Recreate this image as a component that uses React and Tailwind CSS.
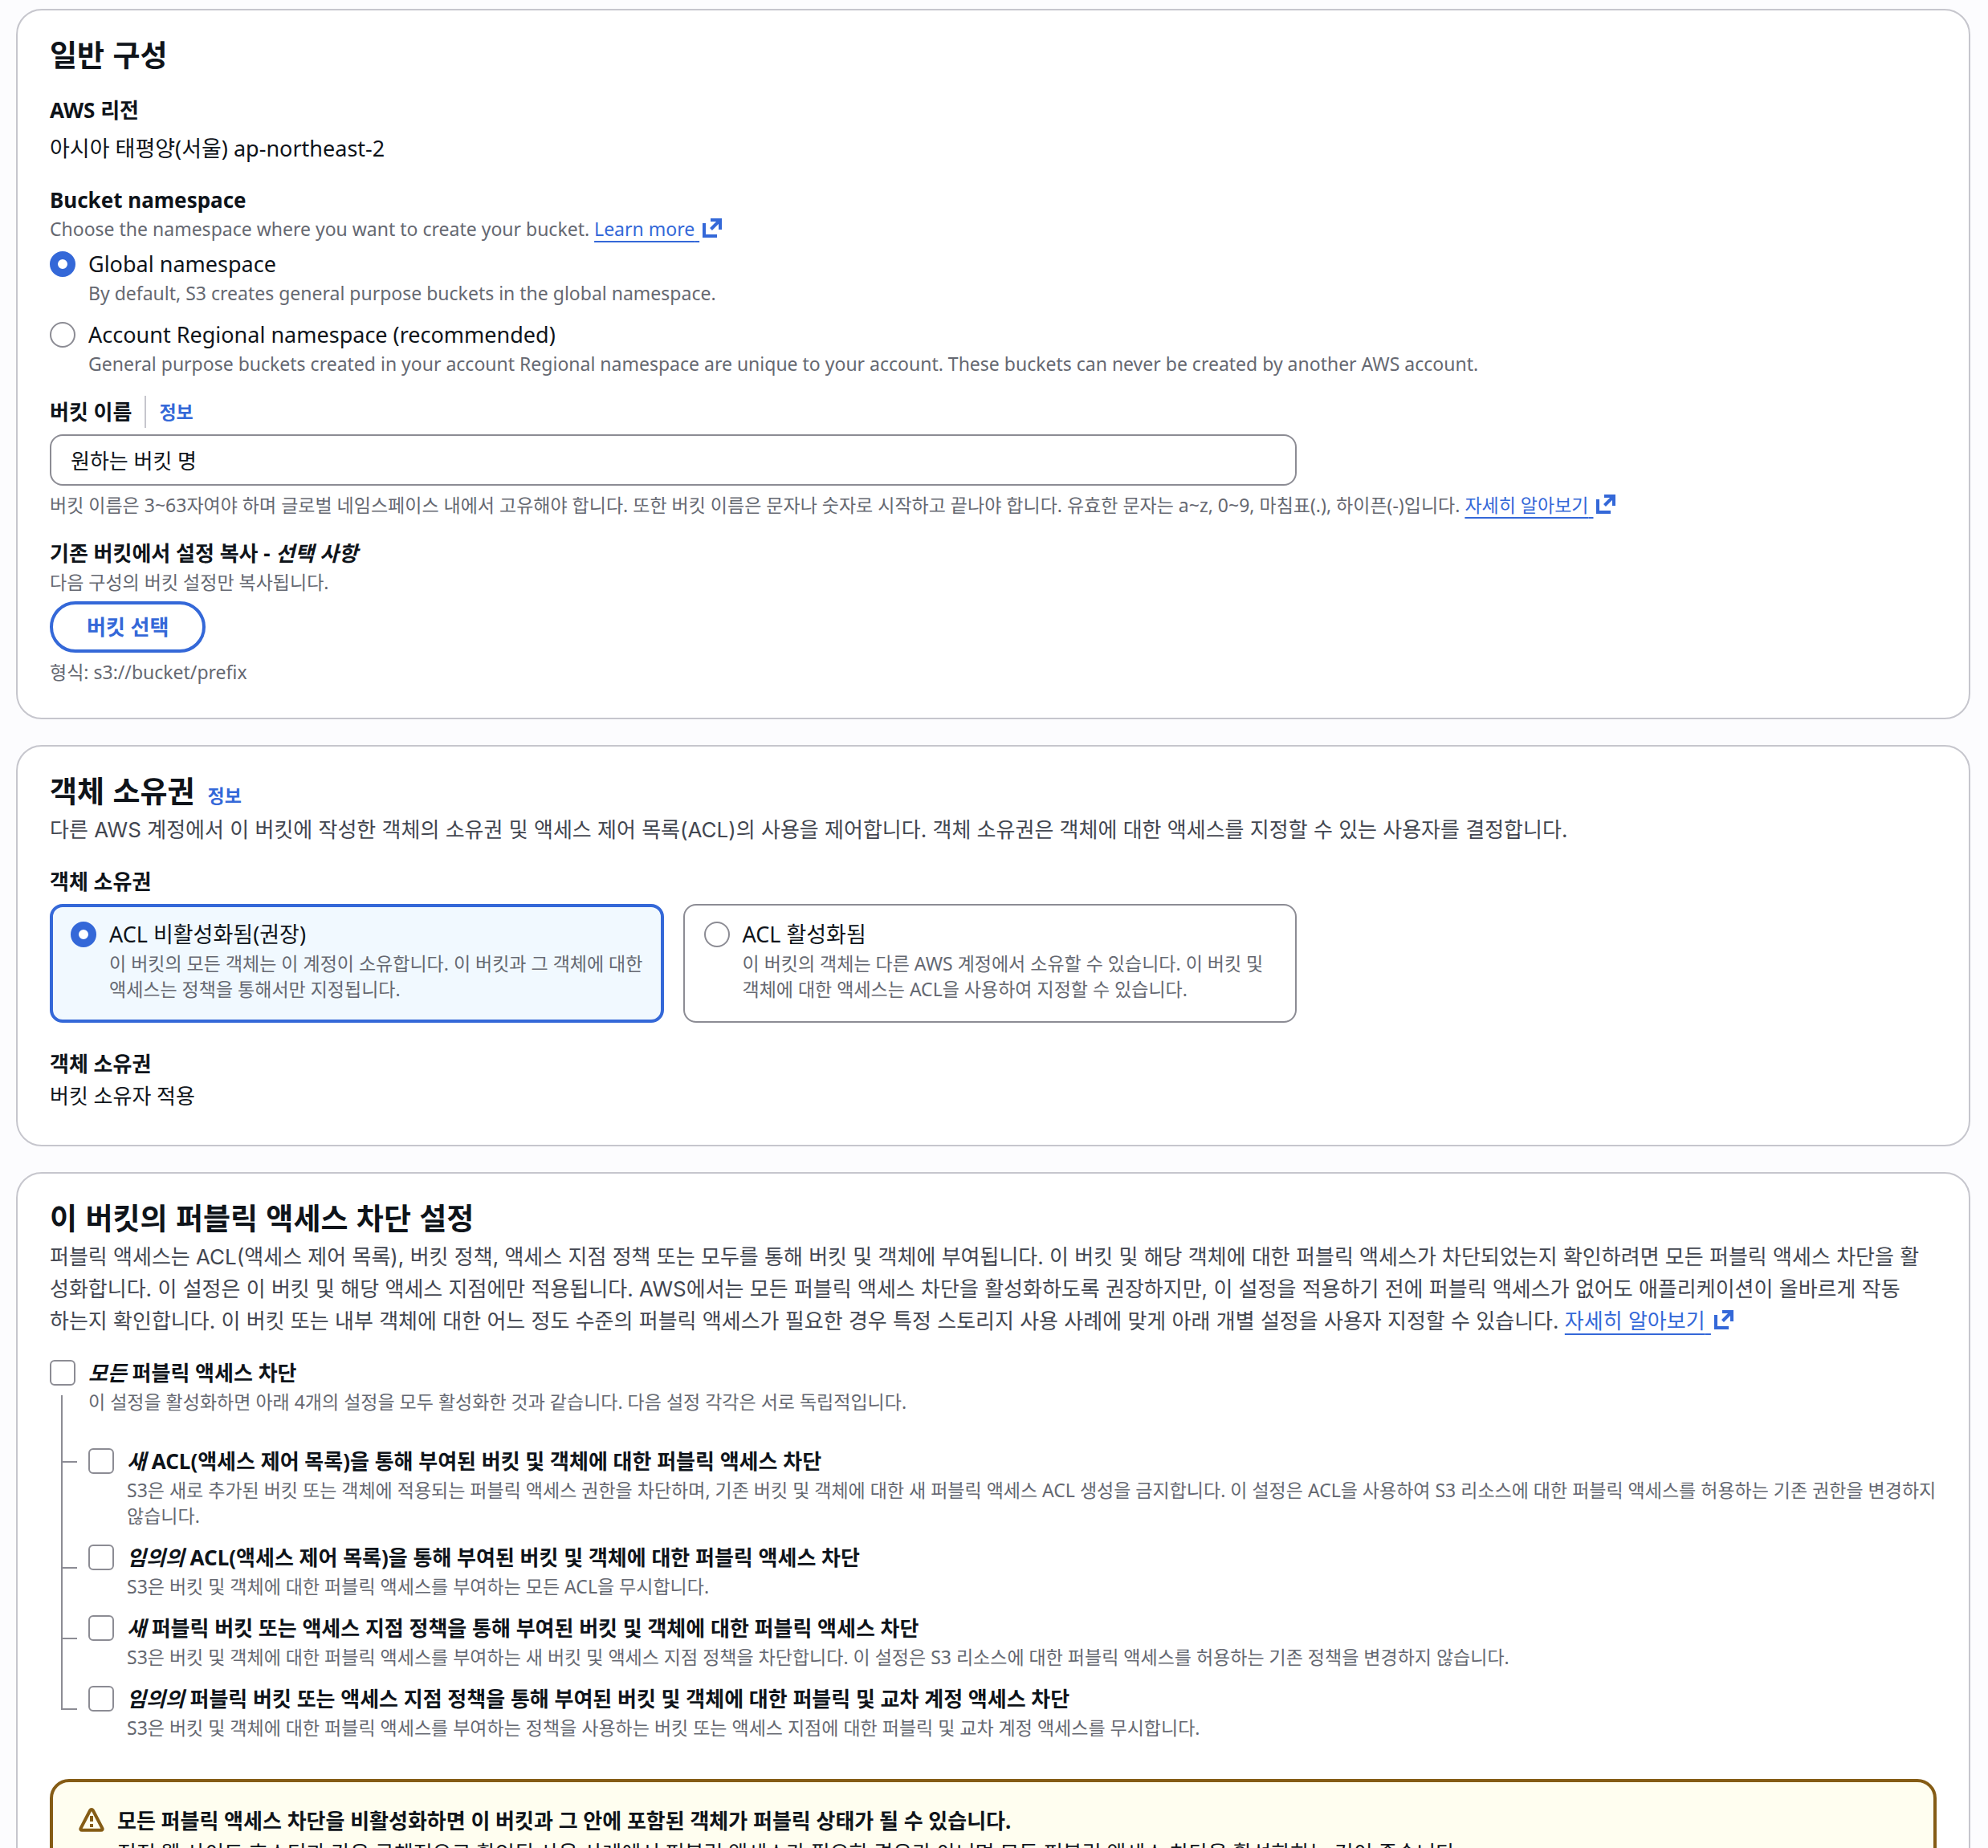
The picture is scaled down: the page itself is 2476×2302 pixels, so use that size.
import { useState } from "react";

const BLOCK_OPTIONS = [
  {
    id: "new-acl",
    em: "새",
    title: "ACL(액세스 제어 목록)을 통해 부여된 버킷 및 객체에 대한 퍼블릭 액세스 차단",
    desc: "S3은 새로 추가된 버킷 또는 객체에 적용되는 퍼블릭 액세스 권한을 차단하며, 기존 버킷 및 객체에 대한 새 퍼블릭 액세스 ACL 생성을 금지합니다. 이 설정은 ACL을 사용하여 S3 리소스에 대한 퍼블릭 액세스를 허용하는 기존 권한을 변경하지 않습니다.",
  },
  {
    id: "any-acl",
    em: "임의의",
    title: "ACL(액세스 제어 목록)을 통해 부여된 버킷 및 객체에 대한 퍼블릭 액세스 차단",
    desc: "S3은 버킷 및 객체에 대한 퍼블릭 액세스를 부여하는 모든 ACL을 무시합니다.",
  },
  {
    id: "new-policy",
    em: "새",
    title: "퍼블릭 버킷 또는 액세스 지점 정책을 통해 부여된 버킷 및 객체에 대한 퍼블릭 액세스 차단",
    desc: "S3은 버킷 및 객체에 대한 퍼블릭 액세스를 부여하는 새 버킷 및 액세스 지점 정책을 차단합니다. 이 설정은 S3 리소스에 대한 퍼블릭 액세스를 허용하는 기존 정책을 변경하지 않습니다.",
  },
  {
    id: "any-policy",
    em: "임의의",
    title: "퍼블릭 버킷 또는 액세스 지점 정책을 통해 부여된 버킷 및 객체에 대한 퍼블릭 및 교차 계정 액세스 차단",
    desc: "S3은 버킷 및 객체에 대한 퍼블릭 액세스를 부여하는 정책을 사용하는 버킷 또는 액세스 지점에 대한 퍼블릭 및 교차 계정 액세스를 무시합니다.",
  },
];

function Card({ children }) {
  return (
    <section className="bg-white border-2 border-[#c6c6cd] rounded-[32px] pt-[30px] px-10 pb-[41px]">
      {children}
    </section>
  );
}

function Title({ children }) {
  return (
    <h2 className="font-['Noto_Sans_CJK_KR','Noto_Sans',sans-serif] text-[37px] leading-[48px] font-bold">{children}</h2>
  );
}

function Description({ children }) {
  return (
    <p className="mt-[6px] font-['Inter','Noto_Sans_CJK_KR',sans-serif] text-[#424650]">{children}</p>
  );
}

function Hint({ children, className = "" }) {
  return <p className={`text-[23px] leading-8 text-[#656871] ${className}`}>{children}</p>;
}

function ExternalIcon() {
  return (
    <svg viewBox="0 0 24 24" className="inline-block w-6 h-6 ml-1 -mt-2 align-middle" fill="none" stroke="currentColor" strokeWidth="4" aria-hidden="true">
      <path d="M10 2h12v12" />
      <path d="M21.5 2.5 10.5 13.5" />
      <path d="M2 6v16h16" />
    </svg>
  );
}

function ExternalLink({ children }) {
  return (
    <a href="#" className="text-[#3468d8] whitespace-nowrap">
      <span className="underline decoration-2 underline-offset-[6px] whitespace-pre">{children} </span>
      <ExternalIcon />
    </a>
  );
}

function InfoLink() {
  return (
    <a href="#" className="text-[23px] leading-8 font-bold text-[#3468d8]">
      정보
    </a>
  );
}

function RadioOption({ id, name, value, checked, onChange, label, desc }) {
  return (
    <div className="flex gap-4">
      <input
        type="radio"
        id={id}
        name={name}
        value={value}
        checked={checked}
        onChange={() => onChange(value)}
        className="appearance-none shrink-0 w-8 h-8 mt-1 rounded-full bg-white border-2 border-[#8c8c94] checked:border-[10px] checked:border-[#3468d8]"
      />
      <div>
        <label htmlFor={id} className="block text-[27px]">{label}</label>
        <Hint>{desc}</Hint>
      </div>
    </div>
  );
}

function Checkbox({ id, checked, onChange }) {
  return (
    <input
      type="checkbox"
      id={id}
      checked={checked}
      onChange={onChange}
      className="appearance-none shrink-0 w-8 h-8 mt-1 rounded-md bg-white border-2 border-[#8c8c94] checked:bg-[#3468d8] checked:border-[#3468d8]"
    />
  );
}

function GeneralConfig() {
  const [namespace, setNamespace] = useState("global");
  const [bucket, setBucket] = useState("원하는 버킷 명");

  return (
    <Card>
      <Title>일반 구성</Title>

      <h3 className="mt-[26px] font-bold">AWS 리전</h3>
      <p className="mt-2 text-[27px]">아시아 태평양(서울) ap-northeast-2</p>

      <fieldset className="mt-6">
        <legend className="font-bold">Bucket namespace</legend>
        <Hint>
          Choose the namespace where you want to create your bucket. <ExternalLink>Learn more</ExternalLink>
        </Hint>
        <div className="mt-2 flex flex-col gap-4">
          <RadioOption
            id="ns-global"
            name="namespace"
            value="global"
            checked={namespace === "global"}
            onChange={setNamespace}
            label="Global namespace"
            desc="By default, S3 creates general purpose buckets in the global namespace."
          />
          <RadioOption
            id="ns-regional"
            name="namespace"
            value="regional"
            checked={namespace === "regional"}
            onChange={setNamespace}
            label="Account Regional namespace (recommended)"
            desc="General purpose buckets created in your account Regional namespace are unique to your account. These buckets can never be created by another AWS account."
          />
        </div>
      </fieldset>

      <div className="mt-6 flex items-center">
        <label htmlFor="bucket-name" className="font-bold pr-4 border-r-2 border-[#c6c6cd] mr-4">버킷 이름</label>
        <InfoLink />
      </div>
      <input
        id="bucket-name"
        type="text"
        value={bucket}
        onChange={(e) => setBucket(e.target.value)}
        className="block mt-2 w-full max-w-[1553px] h-16 px-6 rounded-2xl border-2 border-[#8c8c94] bg-white"
      />
      <Hint className="mt-2">
        버킷 이름은 3~63자여야 하며 글로벌 네임스페이스 내에서 고유해야 합니다. 또한 버킷 이름은 문자나 숫자로 시작하고 끝나야 합니다. 유효한 문자는 a~z, 0~9, 마침표(.), 하이픈(-)입니다.{" "}
        <ExternalLink>자세히 알아보기</ExternalLink>
      </Hint>

      <h3 className="mt-6 font-bold">
        기존 버킷에서 설정 복사 - <em>선택 사항</em>
      </h3>
      <Hint>다음 구성의 버킷 설정만 복사됩니다.</Hint>
      <button
        type="button"
        className="block mt-2 h-16 px-[42px] rounded-full border-4 border-[#3468d8] bg-white text-[#3468d8] font-bold leading-10"
      >
        버킷 선택
      </button>
      <Hint className="mt-2">형식: s3://bucket/prefix</Hint>
    </Card>
  );
}

function Ownership() {
  const [acl, setAcl] = useState("disabled");
  const tiles = [
    {
      value: "disabled",
      label: "ACL 비활성화됨(권장)",
      desc: "이 버킷의 모든 객체는 이 계정이 소유합니다. 이 버킷과 그 객체에 대한 액세스는 정책을 통해서만 지정됩니다.",
    },
    {
      value: "enabled",
      label: "ACL 활성화됨",
      desc: "이 버킷의 객체는 다른 AWS 계정에서 소유할 수 있습니다. 이 버킷 및 객체에 대한 액세스는 ACL을 사용하여 지정할 수 있습니다.",
    },
  ];

  return (
    <Card>
      <div className="flex items-baseline gap-4">
        <Title>객체 소유권</Title>
        <InfoLink />
      </div>
      <Description>
        다른 AWS 계정에서 이 버킷에 작성한 객체의 소유권 및 액세스 제어 목록(ACL)의 사용을 제어합니다. 객체 소유권은 객체에 대한 액세스를 지정할 수 있는 사용자를 결정합니다.
      </Description>

      <fieldset className="mt-6">
        <legend className="font-bold">객체 소유권</legend>
        <div className="mt-2 grid grid-cols-2 gap-6 max-w-[1553px]">
          {tiles.map((t) => (
            <div
              key={t.value}
              className={
                acl === t.value
                  ? "min-h-[148px] rounded-2xl border-4 border-[#3468d8] bg-[#f1f9ff] px-[22px] py-[14px]"
                  : "min-h-[148px] rounded-2xl border-2 border-[#8c8c94] bg-white px-6 py-4"
              }
            >
              <RadioOption
                id={`acl-${t.value}`}
                name="acl"
                value={t.value}
                checked={acl === t.value}
                onChange={setAcl}
                label={t.label}
                desc={t.desc}
              />
            </div>
          ))}
        </div>
      </fieldset>

      <h3 className="mt-[31px] font-bold">객체 소유권</h3>
      <p>버킷 소유자 적용</p>
    </Card>
  );
}

function PublicAccess() {
  const [blocked, setBlocked] = useState([]);
  const all = blocked.length === BLOCK_OPTIONS.length;

  const toggleAll = () => setBlocked(all ? [] : BLOCK_OPTIONS.map((o) => o.id));
  const toggle = (id) =>
    setBlocked((prev) => (prev.includes(id) ? prev.filter((x) => x !== id) : [...prev, id]));

  return (
    <Card>
      <Title>이 버킷의 퍼블릭 액세스 차단 설정</Title>
      <Description>
        퍼블릭 액세스는 ACL(액세스 제어 목록), 버킷 정책, 액세스 지점 정책 또는 모두를 통해 버킷 및 객체에 부여됩니다. 이 버킷 및 해당 객체에 대한 퍼블릭 액세스가 차단되었는지 확인하려면 모든 퍼블릭 액세스 차단을 활
        <br />
        성화합니다. 이 설정은 이 버킷 및 해당 액세스 지점에만 적용됩니다. AWS에서는 모든 퍼블릭 액세스 차단을 활성화하도록 권장하지만, 이 설정을 적용하기 전에 퍼블릭 액세스가 없어도 애플리케이션이 올바르게 작동
        <br />
        하는지 확인합니다. 이 버킷 또는 내부 객체에 대한 어느 정도 수준의 퍼블릭 액세스가 필요한 경우 특정 스토리지 사용 사례에 맞게 아래 개별 설정을 사용자 지정할 수 있습니다.{" "}
        <ExternalLink>자세히 알아보기</ExternalLink>
      </Description>

      <div className="mt-6 flex gap-4">
        <Checkbox id="block-all" checked={all} onChange={toggleAll} />
        <label htmlFor="block-all" className="font-bold"><em>모든</em> 퍼블릭 액세스 차단</label>
      </div>
      <div className="flex">
        {/* trunk of the option tree */}
        <div className="w-12 pl-[14px] pt-2">
          <div className="h-full border-l-2 border-[#8c8c94]" />
        </div>
        <Hint className="pb-[38px]">
          이 설정을 활성화하면 아래 4개의 설정을 모두 활성화한 것과 같습니다. 다음 설정 각각은 서로 독립적입니다.
        </Hint>
      </div>

      <ul>
        {BLOCK_OPTIONS.map((o, i) => (
          <li key={o.id} className="flex">
            <div className="w-12 shrink-0 pl-[14px] flex flex-col">
              <div className={i === 0 ? "w-5 h-[22px] border-l-2 border-b-2 border-[#8c8c94]" : "w-5 h-[34px] border-l-2 border-b-2 border-[#8c8c94]"} />
              {i < BLOCK_OPTIONS.length - 1 && <div className="grow border-l-2 border-[#8c8c94]" />}
            </div>
            <div className={i < BLOCK_OPTIONS.length - 1 ? "flex gap-4 pb-4" : "flex gap-4"}>
              <Checkbox id={o.id} checked={blocked.includes(o.id)} onChange={() => toggle(o.id)} />
              <div>
                <label htmlFor={o.id} className="block font-bold"><em>{o.em}</em> {o.title}</label>
                <Hint>{o.desc}</Hint>
              </div>
            </div>
          </li>
        ))}
      </ul>

      <div className="mt-12 flex gap-4 rounded-3xl border-4 border-[#855c15] bg-[#fffef0] px-8 pt-7 pb-8" role="alert">
        <svg viewBox="0 0 32 32" className="shrink-0 w-8 h-8 mt-1" fill="none" aria-hidden="true">
          <path d="M14.3 3 2.600 25.400c-.7 1.300.1 2.400 1.400 2.400h24c1.300 0 2.100-1.100 1.400-2.400L17.700 3c-.8-1.300-2.600-1.300-3.400 0Z" stroke="#855c15" strokeWidth="4" strokeLinejoin="round" />
          <path d="M14 10h4v7h-4zM14 20h4v4h-4z" fill="#855c15" />
        </svg>
        <div>
          <p className="font-bold">모든 퍼블릭 액세스 차단을 비활성화하면 이 버킷과 그 안에 포함된 객체가 퍼블릭 상태가 될 수 있습니다.</p>
          <p>정적 웹 사이트 호스팅과 같은 구체적으로 확인된 사용 사례에서 퍼블릭 액세스가 필요한 경우가 아니면 모든 퍼블릭 액세스 차단을 활성화하는 것이 좋습니다.</p>
        </div>
      </div>
    </Card>
  );
}

export default function App() {
  return (
    <main
      lang="ko"
      className="h-screen overflow-hidden bg-[#fcfcfe] pt-[11px] pl-5 pr-[22px] font-['Noto_Sans','Noto_Sans_CJK_KR',sans-serif] text-[26px] leading-10 text-[#0f141a]"
    >
      <div className="flex flex-col gap-8">
        <GeneralConfig />
        <Ownership />
        <PublicAccess />
      </div>
    </main>
  );
}
